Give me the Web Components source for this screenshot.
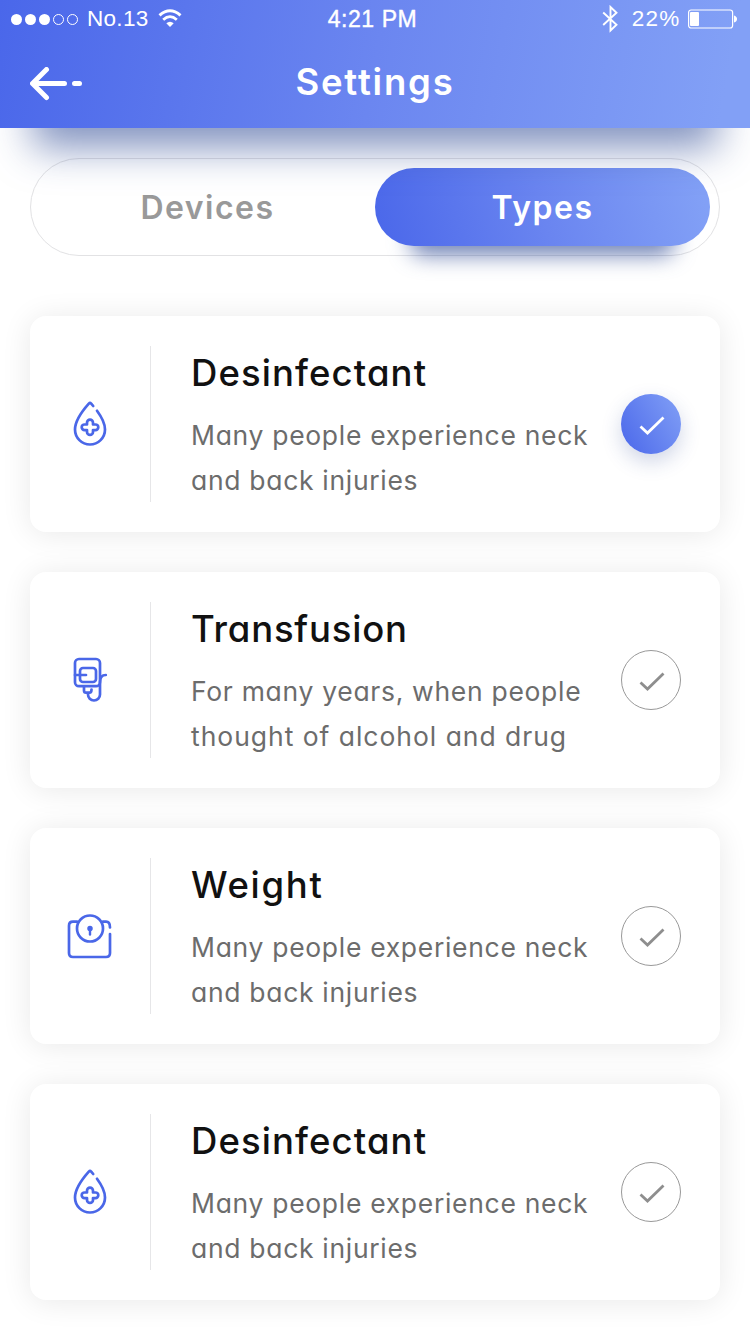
<!DOCTYPE html>
<html lang="en">
<head>
<meta charset="utf-8">
<title>Settings</title>
<style>
html, body { margin: 0; background: #fff; }
body { width: 750px; height: 1334px; overflow: hidden; font-family: Inter, "Open Sans", sans-serif; font-feature-settings: "cv11"; }
</style>
</head>
<body>
<settings-screen></settings-screen>
<script>
const define = (name, html, setup) => {
  const t = document.createElement('template');
  t.innerHTML = html;
  customElements.define(name, class extends HTMLElement {
    constructor() {
      super();
      this.attachShadow({ mode: 'open' }).append(t.content.cloneNode(true));
    }
    connectedCallback() { if (setup) setup(this, this.shadowRoot); }
  });
};

const glyphs = {
  drop: `<svg width="70" height="70" viewBox="0 0 70 70"><path d="M38.2 16L36.2 13.6Q35 12.4 33.8 13.6C29 19 20 30 20 39.500a15 15 0 0 0 30 0C50 33 46.200 26.500 42 20.800"/><path d="M32 32.700a3 3 0 0 1 6 0v1.800h2.500a2.800 2.800 0 0 1 0 5.600h-2.500v1.800a3 3 0 0 1-6 0v-1.800h-2.500a2.800 2.800 0 0 1 0-5.600h2.500z"/></svg>`,
  drip: `<svg width="70" height="70" viewBox="0 1 70 70"><rect x="20" y="14" width="25" height="27.200" rx="4"/><rect x="25" y="23" width="16" height="14" rx="3"/><path d="M20 30H31M29 42v3.500q0 2.200 2 2.200h3.500q2 0 2-3.200"/><path d="M50.800 30Q45 30 45 37V49.500a6 6 0 0 1-12 0v-1"/></svg>`,
  scale: `<svg width="70" height="70" viewBox="0 1.500 70 70"><path d="M22 21.200H18Q14 21.200 14 25.200V52.500Q14 56.500 18 56.500H51Q55 56.500 55 52.500V33.500M48 21.200H51Q55 21.200 55 27"/><circle cx="35" cy="28" r="13"/><circle cx="35" cy="28" r="2" fill="#4a67e8" stroke-width="1.500"/><path d="M35 29V34" stroke-width="2.400"/></svg>`
};

define('status-bar', `
<style>
:host { display: flex; height: 38px; position: relative; padding: 0 13px 0 11px; align-items: center; justify-content: space-between; box-sizing: border-box; color: #fff; font: 22.500px/38px "Liberation Sans", Arial, sans-serif; }
div { display: flex; align-items: center; }
svg { display: block; fill: none; stroke: #fff; }
.time { position: absolute; left: 0; right: 0; justify-content: center; font-size: 23px; letter-spacing: .55px; padding-right: 5px; -webkit-text-stroke: .4px #fff; }
</style>
<div><svg width="68" height="12" viewBox="0 0 68 12"><g fill="#fff" stroke="none"><circle cx="5.500" cy="6.500" r="5.500"/><circle cx="19.500" cy="6.500" r="5.500"/><circle cx="33.500" cy="6.500" r="5.500"/></g><circle cx="47.500" cy="6.500" r="5"/><circle cx="61.500" cy="6.500" r="5"/></svg>
<span style="margin-left:8px;letter-spacing:.3px">No.13</span>
<svg style="margin-left:9px" width="25" height="20" viewBox="0 0 25 20"><path d="M1.500 6.300Q12 -2.800 22.500 6.300" stroke-width="3"/><path d="M5.200 10.700Q12 4.600 18.800 10.700" stroke-width="2.800"/><path d="M8.300 14.300Q12 11 15.700 14.300L12 18z" fill="#fff" stroke="none"/></svg></div>
<div class="time">4:21 PM</div>
<div><svg width="16" height="28" viewBox="0 0 16 28"><path d="M1.200 7.500L14.500 19.800 8.500 25.500V2L14.500 7.800 1.200 20" stroke-width="1.900"/></svg>
<span style="margin:0 7.500px 0 13.500px;letter-spacing:1.200px">22%</span>
<svg width="49" height="20" viewBox="0 0 49 20"><rect x=".6" y="1" width="44" height="18" rx="2.500" stroke-width="1.200"/><rect x="2" y="3" width="9" height="14" fill="#fff" stroke="none" rx="1"/><path d="M46 6.500q3 1 3 3.500t-3 3.500z" fill="#fff" stroke="none"/></svg></div>`);

define('app-header', `
<style>
:host { display: block; height: 128px; position: relative; z-index: 2; background: linear-gradient(100deg, #4a67ea 0%, #6b86f0 50%, #82a0f6 96%); box-shadow: 0 52px 40px -33px rgba(42,70,146,.6); }
.bar { height: 90px; display: grid; grid-template-columns: 60px 1fr 60px; align-items: center; padding: 0 30px; }
h1 { margin: 0; color: #fff; text-align: center; font-size: 36.500px; font-weight: 600; line-height: 89px; height: 90px; letter-spacing: 1.800px; }
svg { margin-top: 2px; fill: none; stroke: #fff; stroke-width: 5; stroke-linecap: round; stroke-linejoin: round; }
</style>
<slot name="status"></slot>
<div class="bar"><svg width="54" height="34" viewBox="0 0 54 34"><path d="M16.500 2.500L2.500 16.500 16.500 30.500M3 16.500H34.500M44.500 16.500H49.500"/></svg><h1><slot></slot></h1></div>`);

define('segment-tabs', `
<style>
:host { display: grid; grid-template-columns: 1fr 1fr; height: 98px; margin: 30px 30px 0; padding: 9px; border: 1px solid #e2e2e4; border-radius: 49px; box-sizing: border-box; }
</style><slot></slot>`);

define('segment-tab', `
<style>
:host { display: block; position: relative; isolation: isolate; text-align: center; font-size: 32px; font-weight: 600; line-height: 79px; height: 78px; letter-spacing: 1.500px; color: #999; }
:host([active]) { color: #fff; }
:host([active])::before { content: ""; position: absolute; z-index: -2; inset: 30px 36px -9px; border-radius: 10px; background: rgba(42,70,146,.68); filter: blur(11px); }
:host([active])::after { content: ""; position: absolute; z-index: -1; inset: 0; border-radius: 39px; background: linear-gradient(75deg, #4a67ea, #6a85f0 50%, #82a0f6 96%); }
</style><slot></slot>`);

define('check-mark', `
<style>
:host { display: flex; align-items: center; justify-content: center; width: 60px; height: 60px; box-sizing: border-box; border-radius: 50%; border: 1px solid #999; color: #8e8e8e; }
:host([checked]) { border: 0; color: #fff; background: linear-gradient(60deg, #4a67ea, #82a0f6); box-shadow: 0 8px 20px rgba(42,68,146,.22); }
svg { fill: none; stroke: currentColor; stroke-width: 2.800; margin: 4px 0 0 2px; }
</style>
<svg width="26" height="20" viewBox="0 0 26 20"><path d="M1.500 10.500L8.500 17 24.500 1.500"/></svg>`);

define('type-card', `
<style>
:host { display: grid; grid-template-columns: 120px 1px 1fr 60px; align-items: center; height: 216px; box-sizing: border-box; padding-right: 39px; border-radius: 16px; background: #fff; box-shadow: 0 2px 30px rgba(0,0,0,.09); }
.icon { display: flex; justify-content: center; padding-top: 2px; }
svg { fill: none; stroke: #4a67e8; stroke-width: 2.700; stroke-linecap: round; stroke-linejoin: round; }
.rule { height: 156px; background: #e6e6e8; }
.copy { padding: 6px 0 0 40px; white-space: nowrap; }
h2 { margin: 0; font-size: 36.500px; line-height: 45px; font-weight: 500; color: #111; letter-spacing: 1.100px; }
p { margin: 17px 0 0; font-size: 26.500px; line-height: 45px; color: #6c6c6c; letter-spacing: .69px; }
</style>
<div class="icon"></div><div class="rule"></div>
<div class="copy"><h2><slot name="title"></slot></h2><p><slot></slot></p></div>
<slot name="check"></slot>`,
  (el, root) => { root.querySelector('.icon').innerHTML = glyphs[el.getAttribute('icon')]; });

define('settings-screen', `
<style>
:host { display: block; }
main { display: flex; flex-direction: column; gap: 40px; padding: 60px 30px 34px; }
.tight { letter-spacing: .8px; }
.wide { letter-spacing: 1.700px; }
.loose { letter-spacing: .97px; }
</style>
<app-header><status-bar slot="status"></status-bar>Settings</app-header>
<segment-tabs><segment-tab>Devices</segment-tab><segment-tab active>Types</segment-tab></segment-tabs>
<main>
<type-card icon="drop"><span slot="title">Desinfectant</span>Many people experience neck<br>and back injuries<check-mark slot="check" checked></check-mark></type-card>
<type-card icon="drip"><span slot="title" class="tight">Transfusion</span>For many years, when people<br><span class="loose">thought of alcohol and drug</span><check-mark slot="check"></check-mark></type-card>
<type-card icon="scale"><span slot="title" class="wide">Weight</span>Many people experience neck<br>and back injuries<check-mark slot="check"></check-mark></type-card>
<type-card icon="drop"><span slot="title">Desinfectant</span>Many people experience neck<br>and back injuries<check-mark slot="check"></check-mark></type-card>
</main>`);
</script>
</body>
</html>
